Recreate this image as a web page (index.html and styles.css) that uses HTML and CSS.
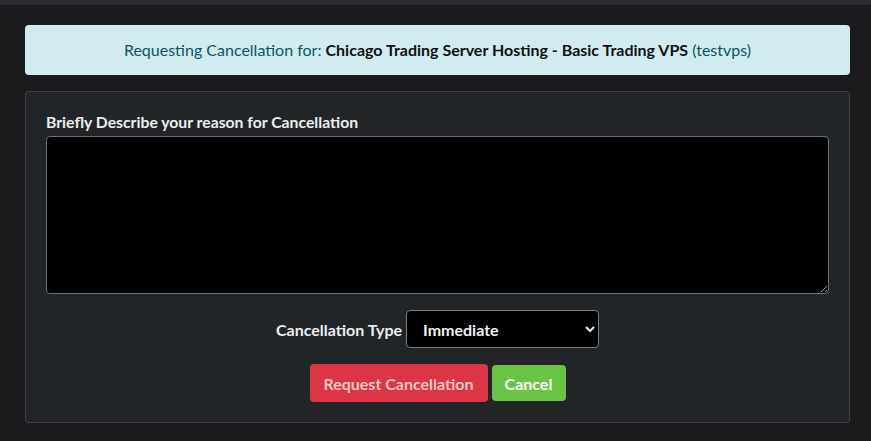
FILE: index.html
```html
<!DOCTYPE html>
<html lang="en">
<head>
    <meta charset="UTF-8">
    <title>Request Cancellation</title>
    <link rel="stylesheet" href="styles.css">
</head>
<body>
    <div class="topbar"></div>

    <div class="page">
        <div class="alert">
            Requesting Cancellation for: <strong>Chicago Trading Server Hosting - Basic Trading VPS</strong> (testvps)
        </div>

        <form class="card">
            <label for="reason">Briefly Describe your reason for Cancellation</label>
            <textarea id="reason"></textarea>

            <div class="type-row">
                <label for="type">Cancellation Type</label>
                <select id="type">
                    <option>Immediate</option>
                    <option>End of Billing Period</option>
                </select>
            </div>

            <div class="actions">
                <button type="submit" class="btn btn-danger">Request Cancellation</button>
                <button type="button" class="btn btn-success">Cancel</button>
            </div>
        </form>
    </div>
</body>
</html>
```

FILE: styles.css
```css
* {
    margin: 0;
    padding: 0;
    box-sizing: border-box;
}

body {
    background: #1b1b1e;
    font-family: Lato, "Open Sans", sans-serif;
    font-size: 16px;
    color: #e8e9ea;
}

.topbar {
    height: 5px;
    background: #2b2c30;
}

.page {
    padding: 20px 21px 0 25px;
}

.alert {
    background: #d1ecf1;
    color: #0c5460;
    border-radius: 4px;
    height: 50px;
    line-height: 50px;
    text-align: center;
    font-size: 16px;
}

.alert strong {
    color: #111;
    font-weight: 700;
}

.card {
    margin-top: 16px;
    width: 825px;
    background: #212528;
    border: 1px solid #3c3f43;
    border-radius: 3px;
    padding: 20px 20px 20px 20px;
}

.card > label {
    display: block;
    font-weight: 700;
    font-size: 15.75px;
    color: #eceeef;
    margin-bottom: 4px;
    line-height: 20px;
}

textarea {
    display: block;
    width: 783px;
    height: 158px;
    background: #000;
    border: 1px solid #6f7378;
    border-radius: 4px;
    color: #fff;
    resize: vertical;
}

.type-row {
    display: flex;
    justify-content: center;
    align-items: center;
    gap: 4px;
    margin-top: 16px;
}

.type-row label {
    font-weight: 700;
    color: #eceeef;
}

select {
    width: 193px;
    height: 38px;
    background: #000;
    color: #f0f0f0;
    border: 1px solid #7a7d82;
    border-radius: 4px;
    padding: 0 12px 0 12px;
    font-family: inherit;
    font-size: 16px;
    font-weight: 700;
}

.actions {
    display: flex;
    justify-content: center;
    gap: 4px;
    margin-top: 16px;
}

.btn {
    border: none;
    border-radius: 4px;
    font-family: inherit;
    font-size: 16px;
    font-weight: 700;
    padding: 0 12px;
    height: 38px;
    cursor: pointer;
}

.btn-danger {
    background: #dc3545;
    color: #f3c6cc;
    width: 178px;
}

.btn-success {
    background: #6ac443;
    color: #fff;
    width: 74px;
    height: 36px;
    margin-top: 1px;
}
```
